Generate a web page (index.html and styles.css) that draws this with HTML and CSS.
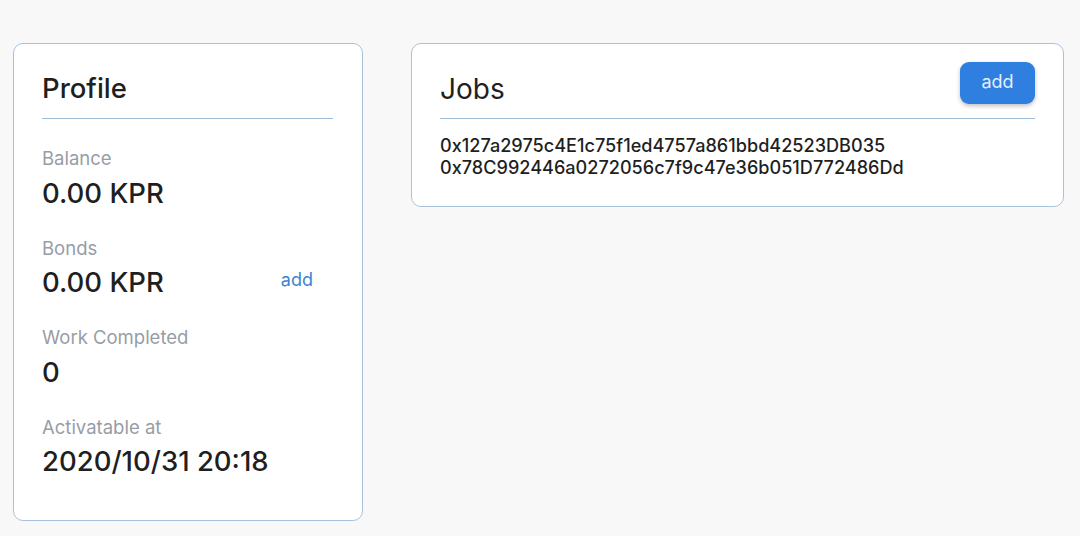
FILE: index.html
```html
<!DOCTYPE html>
<html>
<head>
<meta charset="utf-8">
<link rel="stylesheet" href="styles.css">
</head>
<body>
<main class="page">
  <section class="card profile">
    <h2 class="card-title">Profile</h2>
    <div class="stat">
      <div class="label">Balance</div>
      <div class="value">0.00 KPR</div>
    </div>
    <div class="stat">
      <div class="label">Bonds</div>
      <div class="value-row">
        <div class="value">0.00 KPR</div>
        <a class="link">add</a>
      </div>
    </div>
    <div class="stat">
      <div class="label">Work Completed</div>
      <div class="value">0</div>
    </div>
    <div class="stat">
      <div class="label">Activatable at</div>
      <div class="value">2020/10/31 20:18</div>
    </div>
  </section>
  <section class="card jobs">
    <div class="jobs-head">
      <h2 class="card-title jobs-title">Jobs</h2>
      <button class="btn">add</button>
    </div>
    <ul class="job-list">
      <li>0x127a2975c4E1c75f1ed4757a861bbd42523DB035</li>
      <li>0x78C992446a0272056c7f9c47e36b051D772486Dd</li>
    </ul>
  </section>
</main>
</body>
</html>
```
FILE: styles.css
```css
* { box-sizing: border-box; }
html, body { margin: 0; padding: 0; }
body {
  background: #f8f8f8;
  font-family: Inter, "Open Sans", sans-serif;
  color: #1f1f1f;
  width: 1080px;
  height: 536px;
  overflow: hidden;
}
.page {
  display: grid;
  grid-template-columns: 350px 653px;
  column-gap: 48px;
  align-items: start;
  padding: 43px 0 0 13px;
}
.card {
  background: #ffffff;
  border: 1px solid #a9c2dc;
  border-radius: 10px;
}
.profile {
  padding: 26px 29px 28px 28px;
  height: 478px;
}
.card-title {
  margin: 0;
  font-size: 27.5px;
  font-weight: 500;
  line-height: 36px;
  padding-bottom: 12px;
  border-bottom: 1px solid #9fbdd8;
  color: #1f1f1f;
}
.stat { margin-top: 28px; }
.stat + .stat { margin-top: 27px; }
.label {
  font-size: 18.5px;
  line-height: 22px;
  color: #979da6;
}
.value {
  font-size: 27.5px;
  font-weight: 500;
  line-height: 34px;
  margin-top: 6.5px;
  color: #1f1f1f;
}
.value-row {
  display: flex;
  justify-content: space-between;
  align-items: center;
  padding-right: 20px;
}
.link {
  color: #3b86d0;
  font-size: 18px;
  margin-top: 2px;
}
.jobs {
  padding: 18px 28px 28px 28px;
}
.jobs-head {
  display: flex;
  justify-content: space-between;
  align-items: flex-start;
  border-bottom: 1px solid #9fbdd8;
  padding-bottom: 11px;
}
.jobs-title {
  border: 0;
  padding: 0;
  margin-top: 9px;
  font-weight: 400;
  font-size: 28px;
}
.btn {
  font-family: Inter, sans-serif;
  background: #2f7fe0;
  color: #e3eeff;
  border: 0;
  border-radius: 9px;
  width: 75px;
  height: 42px;
  font-size: 18px;
  padding: 0 0 4px 0;
  box-shadow: 0 2px 4px rgba(0, 0, 0, 0.25);
}
.job-list {
  list-style: none;
  margin: 15px 0 0 0;
  padding: 0;
  font-size: 18.1px;
  font-weight: 500;
  line-height: 22px;
  color: #1f1f1f;
}
```
